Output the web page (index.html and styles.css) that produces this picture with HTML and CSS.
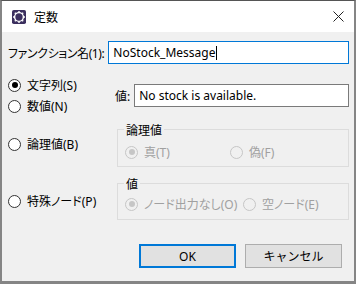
FILE: index.html
```html
<html><head><link rel="stylesheet" href="styles.css"></head><body>
<div class="window">
  <div class="titlebar">
    <svg class="app-icon" width="14" height="14" viewBox="0 0 16 16">
      <rect x="0" y="0" width="16" height="16" rx="2" fill="#3b2f5e"/>
      <circle cx="8" cy="8" r="5" fill="none" stroke="#fff" stroke-width="1.6"/>
      <g stroke="#fff" stroke-width="1.6">
        <line x1="8" y1="1.2" x2="8" y2="3"/>
        <line x1="8" y1="13" x2="8" y2="14.8"/>
        <line x1="1.2" y1="8" x2="3" y2="8"/>
        <line x1="13" y1="8" x2="14.8" y2="8"/>
        <line x1="3.2" y1="3.2" x2="4.4" y2="4.4"/>
        <line x1="11.6" y1="11.6" x2="12.8" y2="12.8"/>
        <line x1="12.8" y1="3.2" x2="11.6" y2="4.4"/>
        <line x1="3.2" y1="12.8" x2="4.4" y2="11.6"/>
      </g>
    </svg>
    <span class="title">定数</span>
    <svg class="close" width="11" height="11" viewBox="0 0 11 11">
      <path d="M0.5 0.5 L10.5 10.5 M10.5 0.5 L0.5 10.5" stroke="#222" stroke-width="1"/>
    </svg>
  </div>

  <div class="content">
    <div class="name-row">
      <span class="label">ファンクション名(1):</span>
      <div class="textbox focused">NoStock_Message<span class="caret"></span></div>
    </div>

    <div class="main">
      <div class="kinds">
        <label class="radio checked k-str"><span class="dot"></span>文字列(S)</label>
        <label class="radio k-num"><span class="dot"></span>数値(N)</label>
        <label class="radio k-bool"><span class="dot"></span>論理値(B)</label>
        <label class="radio k-node"><span class="dot"></span>特殊ノード(P)</label>
      </div>

      <div class="values">
        <div class="value-row">
          <span class="label">値:</span>
          <div class="textbox">No stock is available.</div>
        </div>

        <div class="group g-bool">
          <span class="legend">論理値</span>
          <label class="radio disabled checked"><span class="dot"></span>真(T)</label>
          <label class="radio disabled"><span class="dot"></span>偽(F)</label>
        </div>

        <div class="group g-node">
          <span class="legend">値</span>
          <label class="radio disabled checked"><span class="dot"></span>ノード出力なし(O)</label>
          <label class="radio disabled"><span class="dot"></span>空ノード(E)</label>
        </div>
      </div>
    </div>

    <div class="buttons">
      <button class="btn default">OK</button>
      <button class="btn">キャンセル</button>
    </div>
  </div>
</div>
</body></html>
```

FILE: styles.css
```css
/* Base */
body {
    margin: 0;
    font-family: "Segoe UI", "Noto Sans", "Noto Sans CJK JP", sans-serif;
    font-size: 12px;
    font-feature-settings: "palt";
    color: #000;
    background: #fff;
}

.window {
    width: 356px;
    height: 284px;
    box-sizing: border-box;
    border: 2px solid #858585;
    border-top: 1px solid #555;
    border-bottom-width: 3px;
    background: #f0f0f0;
    display: flex;
    flex-direction: column;
}

/* Title bar */
.titlebar {
    height: 31px;
    background: #fff;
    display: flex;
    align-items: center;
    padding: 0 10px 0 10px;
}

.app-icon {
    margin-right: 8px;
}

.title {
    font-size: 12px;
    flex: 1;
}

/* Content */
.content {
    padding: 9px 5px 0 6px;
    display: flex;
    flex-direction: column;
}

.name-row {
    display: flex;
    align-items: center;
    gap: 4px;
}

.name-row .label {
    letter-spacing: -0.4px;
}

.name-row .textbox {
    flex: 1;
}

.textbox {
    height: 23px;
    box-sizing: border-box;
    border: 1px solid #7a7a7a;
    background: #fff;
    padding: 0 4px;
    display: flex;
    align-items: center;
    font-size: 12px;
}

.textbox.focused {
    border-color: #0078d7;
}

.caret {
    width: 1px;
    height: 14px;
    background: #000;
    margin-left: 1px;
}

.main {
    display: grid;
    grid-template-columns: 107px 1fr;
}

/* Radios */
.radio {
    display: flex;
    align-items: center;
    gap: 6px;
    height: 16px;
}

.dot {
    width: 11px;
    height: 11px;
    border: 1px solid #333;
    border-radius: 50%;
    background: #fff;
    display: flex;
    align-items: center;
    justify-content: center;
}

.radio.checked .dot::after {
    content: "";
    width: 6px;
    height: 6px;
    border-radius: 50%;
    background: #000;
}

.radio.disabled {
    color: #a0a0a0;
}

.radio.disabled .dot {
    border-color: #c6c6c6;
    background: #f0f0f0;
}

.radio.disabled.checked .dot::after {
    background: #c6c6c6;
}

.kinds {
    display: flex;
    flex-direction: column;
    padding-top: 13px;
}

.k-num { margin-top: 5px; }
.k-bool { margin-top: 22px; }
.k-node { margin-top: 41px; }

/* Right column */
.values {
    display: flex;
    flex-direction: column;
    padding-top: 20px;
}

.value-row {
    display: flex;
    align-items: center;
    gap: 4px;
}

.value-row .textbox {
    flex: 1;
}

.group {
    position: relative;
    box-sizing: border-box;
    border: 1px solid #dcdcdc;
    margin-left: 2px;
    display: flex;
    align-items: flex-start;
    padding-left: 7px;
}

.legend {
    position: absolute;
    top: -9px;
    left: 6px;
    padding: 0 2px;
    background: #f0f0f0;
}

.g-bool {
    margin-top: 22px;
    height: 38px;
    padding-top: 14px;
}

.g-bool .radio:first-of-type { width: 105px; }

.g-node {
    margin-top: 16px;
    height: 37px;
    padding-top: 12px;
}

.g-node .radio:first-of-type { width: 118px; }

/* Buttons */
.buttons {
    display: flex;
    justify-content: flex-end;
    gap: 9px;
    padding: 24px 7px 0 0;
}

.btn {
    width: 97px;
    height: 24px;
    border: 1px solid #adadad;
    background: #e1e1e1;
    font-family: inherit;
    font-size: 12px;
    padding: 0;
}

.btn.default {
    border: 2px solid #0078d7;
}
```
